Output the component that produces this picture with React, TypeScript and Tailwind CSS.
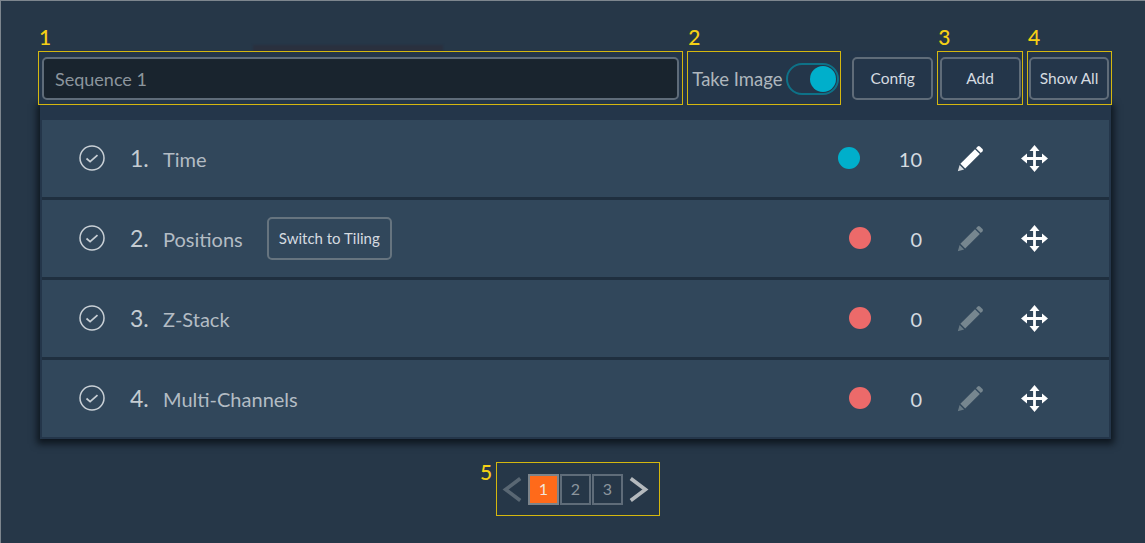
interface SequenceStep {
    index: number;
    name: string;
    count: number;
    active: boolean;
    hasSwitch?: boolean;
}

const steps: SequenceStep[] = [
    { index: 1, name: 'Time', count: 10, active: true },
    { index: 2, name: 'Positions', count: 0, active: false, hasSwitch: true },
    { index: 3, name: 'Z-Stack', count: 0, active: false },
    { index: 4, name: 'Multi-Channels', count: 0, active: false },
];

function Marker({ label, className }: { label: string; className: string }) {
    return (
        <span className={`absolute text-[21px] font-medium leading-none text-[#f5d015] ${className}`}>
            {label}
        </span>
    );
}

function OutlineButton({ label, className }: { label: string; className: string }) {
    return (
        <button
            type="button"
            className={`h-[43px] rounded-[5px] border-2 border-[#5f6c79] pt-[2px] text-[15.5px] text-[#d5dbe0] ${className}`}
        >
            {label}
        </button>
    );
}

function CheckIcon() {
    return (
        <svg viewBox="0 0 26 26" className="ml-[37px] -mt-[2px] h-[26px] w-[26px] text-[#c9d0d6]" fill="none" stroke="currentColor">
            <circle cx="13" cy="13" r="12" strokeWidth="1.5" />
            <path d="M7.5 13.5l3.6 3.2 7.4-6.6" strokeWidth="1.7" />
        </svg>
    );
}

function PencilIcon({ active }: { active: boolean }) {
    return (
        <svg
            viewBox="0 0 27 27"
            className={`ml-[35px] h-[27px] w-[27px] ${active ? 'text-white' : 'text-[#76868f]'}`}
            fill="currentColor"
        >
            <path d="M19 3.2l1.7-1.7a1.6 1.6 0 0 1 2.2 0l2.6 2.6a1.6 1.6 0 0 1 0 2.2L23.8 8Z" />
            <path d="M18 4.2l4.8 4.8L8.2 23.6l-4.8-4.8Z" />
            <path d="M2.6 19.9l4.5 4.5L0.8 26.2Z" opacity="0.8" />
        </svg>
    );
}

function MoveIcon() {
    return (
        <svg viewBox="0 0 27 27" className="ml-[37px] mr-[61px] h-[27px] w-[27px] text-white" fill="currentColor">
            <path d="M13.5 0l5 6h-10Z" />
            <path d="M13.5 27l5-6h-10Z" />
            <path d="M0 13.5l6-5v10Z" />
            <path d="M27 13.5l-6-5v10Z" />
            <path d="M12.1 5h2.8v7.1H22v2.8h-7.1V22h-2.8v-7.1H5v-2.8h7.1Z" />
        </svg>
    );
}

function StepRow({ step }: { step: SequenceStep }) {
    return (
        <div className="flex h-[77px] items-center bg-[#31475b]">
            <CheckIcon />
            <span className="ml-[25px] w-[33px] text-[23px] text-[#c4ccd2]">{step.index}.</span>
            <span className="text-[20px] text-[#b3bcc4]">{step.name}</span>
            {step.hasSwitch ? (
                <button
                    type="button"
                    className="ml-[24px] h-[43px] w-[125px] rounded-[5px] border-2 border-[#66747f] text-[15px] text-[#d5dbe0]"
                >
                    Switch to Tiling
                </button>
            ) : null}
            <span
                className={`ml-auto -mt-[2px] h-[22px] w-[22px] rounded-full ${step.active ? 'bg-[#00afcb]' : 'bg-[#ec6a6a]'}`}
            />
            <span className="ml-[39px] text-[20px] text-[#d5dbe0]">{step.count}</span>
            <PencilIcon active={step.active} />
            <MoveIcon />
        </div>
    );
}

export default function App() {
    return (
        <div
            className="relative h-[543px] w-[1145px] overflow-hidden border-l border-t border-[#7d868e] bg-[#263748]"
            style={{ fontFamily: 'Lato, "Open Sans", sans-serif' }}
        >
            {/* blurred page behind the dialog */}
            <div className="absolute left-[252px] top-[44px] h-[8px] w-[190px] bg-[#2a303e] blur-[1px]" />
            <div className="relative ml-[37px] mt-[50px] w-[1074px]">
                <div className="relative z-10 flex h-[54px] items-stretch bg-[#24364a]">
                    <div className="relative flex w-[646px] items-center border border-[#d4b70f] px-[3px]">
                        <Marker label="1" className="-top-[26px] left-[0px]" />
                        <input
                            readOnly
                            value="Sequence 1"
                            className="h-[43px] w-full rounded-[5px] border-2 border-[#5f6c79] bg-[#19242e] px-[11px] pt-[2px] text-[18px] text-[#8c959d] outline-none"
                        />
                    </div>
                    <div className="relative ml-[4px] flex w-[154px] items-center border border-[#d4b70f] pl-[4px]">
                        <Marker label="2" className="-top-[26px] left-[0px]" />
                        <span className="pt-[3px] text-[18.5px] text-[#aeb6bd]">Take Image</span>
                        <span className="ml-[4px] mt-[1px] flex h-[32px] w-[53px] items-center justify-end rounded-full border-2 border-[#0e7288] pr-[1px]">
                            <span className="h-[26px] w-[26px] rounded-full bg-[#00afcb]" />
                        </span>
                    </div>
                    <div className="ml-[11px] flex items-center">
                        <OutlineButton label="Config" className="w-[81px]" />
                    </div>
                    <div className="relative ml-[4px] flex w-[86px] items-center justify-center border border-[#d4b70f]">
                        <Marker label="3" className="-top-[26px] left-[0px]" />
                        <OutlineButton label="Add" className="w-[81px]" />
                    </div>
                    <div className="relative ml-[4px] flex w-[85px] items-center border border-[#d4b70f] pl-[1px]">
                        <Marker label="4" className="-top-[26px] left-[0px]" />
                        <OutlineButton label="Show All" className="w-[80px]" />
                    </div>
                </div>
                <div className="ml-[2px] w-[1071px] bg-[#24364a] px-[2px] pb-[2px] pt-[15px] shadow-[0_2px_7px_3px_rgba(8,14,20,0.8)]">
                    <div className="flex w-[1067px] flex-col gap-[3px] bg-[#1f2f3f]">
                        {steps.map((step) => (
                            <StepRow key={step.index} step={step} />
                        ))}
                    </div>
                </div>
            </div>
            <div className="mt-[23px] flex justify-center pl-[10px]">
                <div className="relative flex h-[54px] w-[164px] items-center border border-[#d4b70f] pl-[4px]">
                    <Marker label="5" className="-left-[17px] top-[-2px]" />
                    <svg viewBox="0 0 24 28" className="h-[27px] w-[22px] text-[#596773]" fill="none" stroke="currentColor" strokeWidth="4">
                        <path d="M21 2 5 14l16 12" />
                    </svg>
                    <span className="ml-[5px] flex h-[31px] w-[31px] items-center justify-center border-2 border-[#7c848b] bg-[#ff6a1a] text-[16px] text-[#f3e6dc]">
                        1
                    </span>
                    <span className="ml-[1px] flex h-[31px] w-[31px] items-center justify-center border-2 border-[#5f6c79] text-[16px] text-[#8c959d]">
                        2
                    </span>
                    <span className="ml-[1px] flex h-[31px] w-[31px] items-center justify-center border-2 border-[#5f6c79] text-[16px] text-[#8c959d]">
                        3
                    </span>
                    <svg viewBox="0 0 24 28" className="ml-[5px] h-[27px] w-[22px] text-[#b4b9bd]" fill="none" stroke="currentColor" strokeWidth="4">
                        <path d="M3 2l16 12L3 26" />
                    </svg>
                </div>
            </div>
        </div>
    );
}
